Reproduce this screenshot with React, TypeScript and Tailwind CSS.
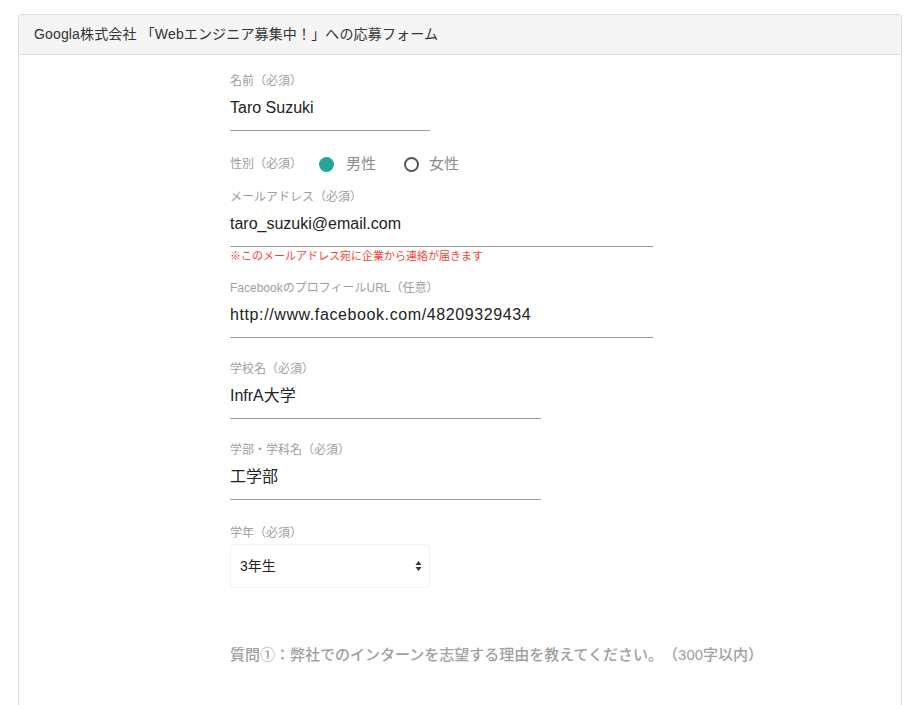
import React from 'react';

const font = { fontFamily: '"Liberation Sans", "Noto Sans CJK JP", sans-serif' };

const Field = ({ label, value, width, className = '', valueClass = '' }: any) => (
  <div className={className}>
    <div className="h-4 text-[12px] leading-4 text-[#9e9e9e]">{label}</div>
    <div
      className={`pt-[7px] pb-[10px] text-[16px] leading-6 text-[#222] border-b border-[#9e9e9e] ${valueClass}`}
      style={{ width }}
    >
      {value}
    </div>
  </div>
);

export default function App() {
  return (
    <div className="min-h-screen bg-white pt-[14px] px-[18px] [text-spacing-trim:space-all]" style={font}>
      <div className="w-[884px] border border-[#dddddd] rounded-t-[4px] min-h-[760px]">
        <div className="h-[40px] bg-[#f5f5f5] border-b border-[#dddddd] rounded-t-[4px] flex items-center pl-[15px] text-[14px] tracking-[0.15px] text-[#333]">
          Googla株式会社 「Webエンジニア募集中！」への応募フォーム
        </div>

        <div className="pl-[211px] pt-[18px]">
          <Field label="名前（必須）" value="Taro Suzuki" width="200px" />

          <div className="mt-[21px] h-6 flex items-center">
            <span className="text-[12px] text-[#9e9e9e]">性別（必須）</span>
            <span className="ml-[17px] w-[15px] h-[15px] rounded-full bg-[#26a69a]" />
            <span className="ml-[12px] text-[15px] text-[#8a8a8a]">男性</span>
            <span className="ml-[28px] w-[15px] h-[15px] rounded-full border-2 border-[#555]" />
            <span className="ml-[10px] text-[15px] text-[#8a8a8a]">女性</span>
          </div>

          <Field label="メールアドレス（必須）" value="taro_suzuki@email.com" width="423px" className="mt-[13px]" />
          <div className="mt-[2px] text-[11px] leading-[14px] text-[#f44336]">
            ※このメールアドレス宛に企業から連絡が届きます
          </div>

          <Field
            label="FacebookのプロフィールURL（任意）"
            value="http://www.facebook.com/48209329434"
            width="423px"
            className="mt-[17px]"
            valueClass="tracking-[0.6px]"
          />
          <Field label="学校名（必須）" value="InfrA大学" width="311px" className="mt-[23px]" />
          <Field label="学部・学科名（必須）" value="工学部" width="311px" className="mt-[23px]" />

          <div className="mt-[25px]">
            <div className="h-4 text-[12px] leading-4 text-[#9e9e9e]">学年（必須）</div>
            <div className="mt-[3px] w-[200px] h-[44px] border border-[#f2f2f2] rounded-[4px] flex items-center justify-between pl-[9px] pr-[7px]">
              <span className="text-[14px] text-[#222]">3年生</span>
              <svg width="7" height="12" viewBox="0 0 7 12">
                <path d="M3.5 1 L6.5 5 L0.5 5 Z" fill="#333" />
                <path d="M3.5 11 L6.5 7 L0.5 7 Z" fill="#333" />
              </svg>
            </div>
          </div>

          <div className="mt-[57px] text-[15px] leading-5 text-[#a0a0a0] font-medium">
            質問①：弊社でのインターンを志望する理由を教えてください。（300字以内）
          </div>
        </div>
      </div>
    </div>
  );
}
